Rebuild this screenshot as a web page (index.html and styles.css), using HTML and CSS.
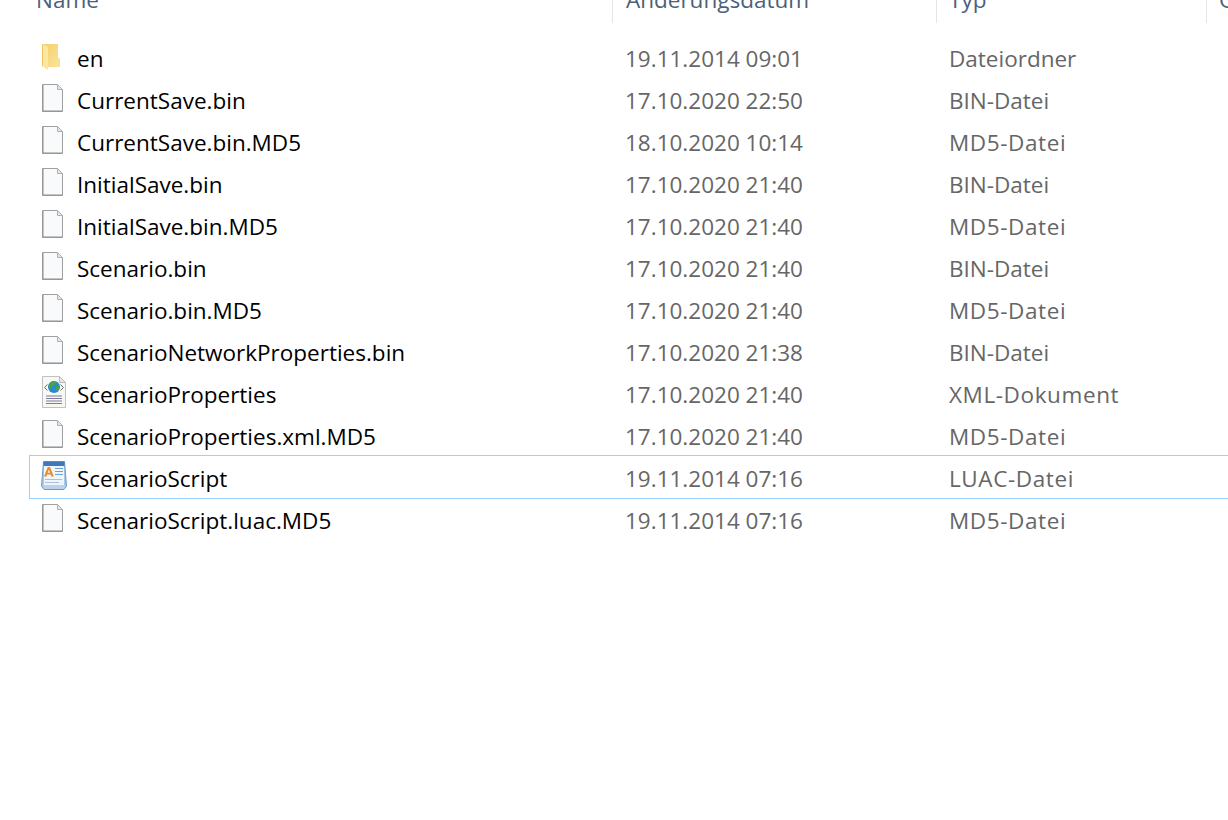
FILE: index.html
```
<!DOCTYPE html>
<html lang="de">
<head>
<meta charset="utf-8">
<title>Explorer</title>
<link rel="stylesheet" href="styles.css">
</head>
<body>
<svg class="defs" width="0" height="0" aria-hidden="true">
<defs>
<linearGradient id="fold" x1="0" y1="0" x2="1" y2="1">
<stop offset="0" stop-color="#f3cf6c"/>
<stop offset="1" stop-color="#fbe39a"/>
</linearGradient>
<symbol id="file" viewBox="0 0 26 34">
<path d="M1.5 3.5H16.5L21.5 8.5V30.5H1.5Z" fill="#f8fafb" stroke="#a0a0a0" stroke-width="1"/>
<path d="M1.5 3.5V30.5H21.5V29.5H2.5V3.5Z" fill="#8e8e8e"/>
<path d="M16.5 3.5V8.5H21.5Z" fill="#e4e6e9" stroke="#b0b0b0" stroke-width="1"/>
</symbol>
</defs>
</svg>
<div class="explorer">
<div class="head">
<div class="hcell hname"><span>Name</span></div>
<div class="hcell hdate"><span>Änderungsdatum</span></div>
<div class="hcell htype"><span>Typ</span></div>
<div class="hcell hsize"><span>Größe</span></div>
</div>
<div class="list">
<div class="row"><div class="icon"><svg class="ic" viewBox="0 0 26 34"><path d="M1 5H17V18.500L19 20V28H6V8Z" fill="url(#fold)"/><path d="M1 5L7 8V31L1 27Z" fill="#fbe6a4"/><path d="M1 5L2 5.500V27.600L1 27Z" fill="#eec65c"/></svg></div><div class="name">en</div><div class="date">19.11.2014 09:01</div><div class="type">Dateiordner</div></div>
<div class="row"><div class="icon"><svg class="ic"><use href="#file"/></svg></div><div class="name">CurrentSave.bin</div><div class="date">17.10.2020 22:50</div><div class="type">BIN-Datei</div></div>
<div class="row"><div class="icon"><svg class="ic"><use href="#file"/></svg></div><div class="name">CurrentSave.bin.MD5</div><div class="date">18.10.2020 10:14</div><div class="type wide">MD5-Datei</div></div>
<div class="row"><div class="icon"><svg class="ic"><use href="#file"/></svg></div><div class="name">InitialSave.bin</div><div class="date">17.10.2020 21:40</div><div class="type">BIN-Datei</div></div>
<div class="row"><div class="icon"><svg class="ic"><use href="#file"/></svg></div><div class="name">InitialSave.bin.MD5</div><div class="date">17.10.2020 21:40</div><div class="type wide">MD5-Datei</div></div>
<div class="row"><div class="icon"><svg class="ic"><use href="#file"/></svg></div><div class="name">Scenario.bin</div><div class="date">17.10.2020 21:40</div><div class="type">BIN-Datei</div></div>
<div class="row"><div class="icon"><svg class="ic"><use href="#file"/></svg></div><div class="name">Scenario.bin.MD5</div><div class="date">17.10.2020 21:40</div><div class="type wide">MD5-Datei</div></div>
<div class="row"><div class="icon"><svg class="ic"><use href="#file"/></svg></div><div class="name">ScenarioNetworkProperties.bin</div><div class="date">17.10.2020 21:38</div><div class="type">BIN-Datei</div></div>
<div class="row"><div class="icon"><svg class="ic" viewBox="0 0 26 34"><path d="M1.500 1.500H18.500L24.500 7.500V32.500H1.500Z" fill="#f7f7f3" stroke="#c2c2bd"/><path d="M18.500 1.500V7.500H24.500Z" fill="#e6e6e2" stroke="#bdbdb8"/><path d="M6.500 9.500L3.500 12.500L6.500 15.500M19.500 9.500L22.500 12.500L19.500 15.500" fill="none" stroke="#6c6c6c" stroke-width="1"/><circle cx="13" cy="12" r="6" fill="#2b86d6"/><path d="M11 6.300Q14 6 15 7.500L13.500 10L11 11L9.500 14L7.300 11Q8 8 11 6.300Z" fill="#45a83c"/><path d="M15.500 11L18.800 11.500Q18.800 14.500 16 16.500L14.500 14Z" fill="#45a83c"/><path d="M5 21H21M5 23.500H21M5 26H21M5 28.500H21" stroke="#7f7a9c" stroke-width="1"/></svg></div><div class="name">ScenarioProperties</div><div class="date">17.10.2020 21:40</div><div class="type wide">XML-Dokument</div></div>
<div class="row"><div class="icon"><svg class="ic"><use href="#file"/></svg></div><div class="name">ScenarioProperties.xml.MD5</div><div class="date">17.10.2020 21:40</div><div class="type wide">MD5-Datei</div></div>
<div class="row selected"><div class="icon"><svg class="ic" viewBox="0 0 26 34"><path d="M0.500 27L2.500 2.500H23.500L25.500 27L23 30.500H3Z" fill="#a9c6e6" stroke="#6f9bcb"/><path d="M2.500 2.500H23.500V7H2.500Z" fill="#3f78b8"/><path d="M3 7H23V26H3Z" fill="#eef5fc"/><path d="M3 17.500L6.800 8H9L12.800 17.500H10.400L9.700 15.500H6.100L5.400 17.500ZM6.700 13.800H9.100L7.900 10.500Z" fill="#ef8a22"/><path d="M14 9.500H22M14 12.500H22M14 15.500H22" stroke="#6f9fd4" stroke-width="1.200"/><path d="M4 20.500H21M4 23.500H18" stroke="#a9c0da" stroke-width="1"/><path d="M1.500 26H24.500L23 30H3Z" fill="#bcd2ea"/></svg></div><div class="name">ScenarioScript</div><div class="date">19.11.2014 07:16</div><div class="type wide">LUAC-Datei</div></div>
<div class="row"><div class="icon"><svg class="ic"><use href="#file"/></svg></div><div class="name">ScenarioScript.luac.MD5</div><div class="date">19.11.2014 07:16</div><div class="type wide">MD5-Datei</div></div>
</div>
</div>
</body>
</html>
```
FILE: styles.css
```
* { box-sizing: border-box; }
html, body { margin: 0; padding: 0; background: #fff; }
body { width: 1228px; height: 820px; overflow: hidden; font-family: "Open Sans", "Noto Sans", sans-serif; font-size: 22.5px; }
.defs { display: block; height: 0; }
.explorer { display: flex; flex-direction: column; }
.head { display: flex; height: 23px; overflow: hidden; color: #4c607a; }
.hcell { display: flex; flex: none; align-items: flex-end; line-height: 30px; padding-bottom: 8px; border-right: 1px solid #e5e5e5; }
.hname { width: 613px; padding-left: 36px; }
.hdate { width: 324px; padding-left: 13px; }
.htype { width: 270px; padding-left: 12px; }
.hsize { width: 21px; padding-left: 12px; border-right: 0; overflow: hidden; }
.list { padding-top: 14px; padding-left: 41px; }
.row { position: relative; display: flex; align-items: center; height: 42px; }
.row.selected::before { content: ""; position: absolute; left: -12px; right: 0; top: -2px; bottom: 0; border: 1px solid #99d1ff; border-right: 0; }
.icon { width: 36px; align-self: flex-start; padding-top: 2px; display: flex; }
.ic { width: 26px; height: 34px; display: block; }
.name { width: 548px; color: #000; }
.date { width: 324px; color: #666; }
.type { color: #666; }
.wide { letter-spacing: 0.6px; }
```
